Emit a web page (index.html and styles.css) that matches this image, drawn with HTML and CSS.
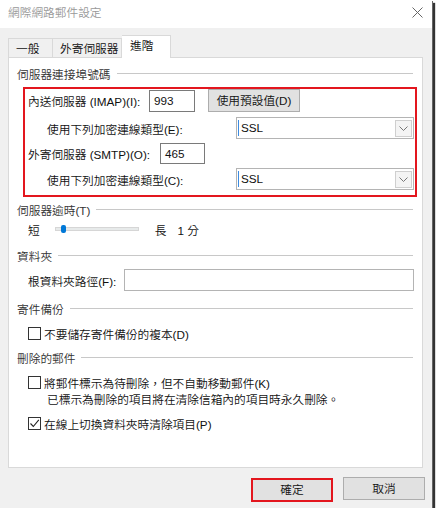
FILE: index.html
```html
<!DOCTYPE html>
<html lang="zh-Hant">
<head>
    <meta charset="UTF-8">
    <title>網際網路郵件設定</title>
    <link rel="stylesheet" href="styles.css">
</head>
<body>
    <div class="dialog">
        <!-- Title bar -->
        <div class="titlebar">
            <span class="title">網際網路郵件設定</span>
            <svg class="close" width="11" height="11" viewBox="0 0 11 11">
                <path d="M0.5 0.5 L10.5 10.5 M10.5 0.5 L0.5 10.5" stroke="#666" stroke-width="1" fill="none"/>
            </svg>
        </div>

        <!-- Tabs -->
        <div class="tabs">
            <div class="tab tab-first">一般</div>
            <div class="tab tab-second">外寄伺服器</div>
            <div class="tab tab-active">進階</div>
        </div>

        <!-- Tab panel -->
        <div class="panel">
            <div class="section-head first"><span>伺服器連接埠號碼</span><div class="rule"></div></div>

            <div class="highlight">
                <div class="row row-imap">
                    <span class="label label-imap">內送伺服器 (IMAP)(I):</span>
                    <div class="textbox port-imap">993</div>
                    <div class="button default-btn">使用預設值(D)</div>
                </div>
                <div class="row row-enc">
                    <span class="label label-enc">使用下列加密連線類型(E):</span>
                    <div class="combo">
                        <span class="combo-text">SSL</span>
                        <div class="combo-btn">
                            <svg width="9" height="5" viewBox="0 0 9 5"><path d="M0.5 0.5 L4.5 4.5 L8.5 0.5" stroke="#777" fill="none"/></svg>
                        </div>
                    </div>
                </div>
                <div class="row row-smtp">
                    <span class="label label-smtp">外寄伺服器 (SMTP)(O):</span>
                    <div class="textbox port-smtp">465</div>
                </div>
                <div class="row row-enc">
                    <span class="label label-enc">使用下列加密連線類型(C):</span>
                    <div class="combo">
                        <span class="combo-text">SSL</span>
                        <div class="combo-btn">
                            <svg width="9" height="5" viewBox="0 0 9 5"><path d="M0.5 0.5 L4.5 4.5 L8.5 0.5" stroke="#777" fill="none"/></svg>
                        </div>
                    </div>
                </div>
            </div>

            <div class="section-head timeout-head"><span>伺服器逾時(T)</span><div class="rule"></div></div>
            <div class="row slider-row">
                <span class="short">短</span>
                <div class="slider"><div class="thumb"></div></div>
                <span class="long">長</span>
                <span class="minutes">1 分</span>
            </div>

            <div class="section-head folder-head"><span>資料夾</span><div class="rule"></div></div>
            <div class="row folder-row">
                <span class="label label-folder">根資料夾路徑(F):</span>
                <div class="textbox folder-box"></div>
            </div>

            <div class="section-head sent-head"><span>寄件備份</span><div class="rule"></div></div>
            <div class="row check-row sent-check">
                <div class="checkbox"></div>
                <span>不要儲存寄件備份的複本(D)</span>
            </div>

            <div class="section-head deleted-head"><span>刪除的郵件</span><div class="rule"></div></div>
            <div class="row check-row mark-check">
                <div class="checkbox"></div>
                <span>將郵件標示為待刪除，但不自動移動郵件(K)</span>
            </div>
            <div class="note">已標示為刪除的項目將在清除信箱內的項目時永久刪除。</div>
            <div class="row check-row purge-check">
                <div class="checkbox">
                    <svg width="11" height="11" viewBox="0 0 11 11"><path d="M1.5 5.5 L4.3 8.5 L9.8 1.8" stroke="#222" stroke-width="1.1" fill="none"/></svg>
                </div>
                <span>在線上切換資料夾時清除項目(P)</span>
            </div>
        </div>

        <!-- Dialog buttons -->
        <div class="footer">
            <div class="button footer-btn ok-btn">確定</div>
            <div class="button footer-btn">取消</div>
        </div>
    </div>
</body>
</html>
```

FILE: styles.css
```css
/* Page */
body {
    margin: 0;
    background-color: white;
    font-family: "Liberation Sans", "Noto Sans CJK TC", sans-serif;
    font-size: 11.7px;
    font-weight: 350;
    color: #111;
}

/* Dialog window */
.dialog {
    width: 432px;
    height: 508px;
    background-color: #f0f0f0;
    box-shadow: 1px 1px 0 #666, 3px 3px 1px #333;
    display: flex;
    flex-direction: column;
    overflow: hidden;
}

/* Title bar */
.titlebar {
    height: 28px;
    flex: none;
    background-color: white;
    display: flex;
    align-items: center;
    padding-left: 8px;
    padding-right: 9px;
}

.title {
    flex: 1;
    color: #999;
    line-height: 16px;
    margin-top: -2px;
}

.close {
    margin-top: -3px;
}

/* Tabs */
.tabs {
    display: flex;
    align-items: flex-end;
    height: 22px;
    margin-top: 7px;
    margin-left: 8px;
    flex: none;
}

.tab {
    height: 19px;
    box-sizing: border-box;
    border: 1px solid #d9d9d9;
    border-bottom: none;
    border-left: none;
    padding-left: 7px;
    line-height: 19px;
}

.tab-first {
    width: 45px;
    border-left: 1px solid #d9d9d9;
}

.tab-second {
    width: 69px;
}

.tab-active {
    width: 49px;
    height: 23px;
    margin-bottom: -1px;
    background-color: white;
    position: relative;
    z-index: 1;
    padding-left: 8px;
    line-height: 20px;
}

/* White panel of the active tab */
.panel {
    height: 411px;
    box-sizing: border-box;
    margin: 0 9px 0 8px;
    background-color: white;
    border: 1px solid #d9d9d9;
    padding: 0 8px;
    flex: none;
}

/* Group heading with a line after it */
.section-head {
    display: flex;
    align-items: center;
    height: 16px;
    color: #333;
}

.section-head .rule {
    flex: 1;
    height: 1px;
    background-color: #c8c8c8;
    margin-left: 6px;
    margin-right: 1px;
}

.first { margin-top: 7px; }
.timeout-head { margin-top: 4px; }
.folder-head { margin-top: 10px; }
.sent-head { margin-top: 9px; }
.deleted-head { margin-top: 8px; }

/* Red annotation around the port settings */
.highlight {
    margin: 6px -3px 0 6px;
    border: 2px solid #e3161e;
    padding: 0 1px 5px 3px;
}

.row {
    display: flex;
    align-items: center;
}

.label {
    flex: none;
    white-space: nowrap;
}

.row-imap { height: 23px; }
.label-imap { width: 121px; }

.row-enc {
    height: 22px;
    margin-top: 5px;
}

.row-smtp + .row-enc { margin-top: 4px; }

.label-enc {
    width: 189px;
    padding-left: 19px;
}

.row-smtp {
    height: 21px;
    margin-top: 4px;
}

.label-smtp { width: 132px; }

/* Text boxes */
.textbox {
    box-sizing: border-box;
    background-color: white;
    border: 1px solid #7a7a7a;
    padding-left: 4px;
    line-height: 19px;
}

.port-imap {
    width: 46px;
    height: 22px;
}

.port-smtp {
    width: 45px;
    height: 21px;
}

/* Push buttons */
.button {
    box-sizing: border-box;
    background-color: #e1e1e1;
    border: 1px solid #adadad;
    text-align: center;
}

.default-btn {
    width: 92px;
    height: 23px;
    margin-left: 13px;
    line-height: 21px;
}

/* Drop-down list */
.combo {
    flex: 1;
    height: 22px;
    box-sizing: border-box;
    border: 1px solid #b4b4b4;
    display: flex;
    align-items: center;
    padding: 0 1px 0 1px;
}

.combo-text {
    flex: 1;
    border-left: 1px solid #3c8be0;
    padding-left: 2px;
    line-height: 16px;
}

.combo-btn {
    width: 17px;
    height: 17px;
    box-sizing: border-box;
    border: 1px solid #cfcfcf;
    background-color: #f4f4f4;
    display: flex;
    align-items: center;
    justify-content: center;
}

/* Timeout slider */
.slider-row {
    height: 16px;
    margin-top: 4px;
    padding-left: 11px;
}

.slider {
    position: relative;
    width: 84px;
    height: 4px;
    box-sizing: border-box;
    background-color: #e7eaea;
    border: 1px solid #d6d6d6;
    margin-left: 15px;
}

.thumb {
    position: absolute;
    left: 5px;
    top: -3px;
    width: 5px;
    height: 8px;
    border-radius: 2px;
    background-color: #0078d7;
}

.long { margin-left: 16px; }
.minutes { margin-left: 11px; }

/* Root folder */
.folder-row {
    height: 22px;
    margin-top: 6px;
    padding-left: 11px;
}

.label-folder { width: 96px; }

.folder-box {
    flex: 1;
    height: 22px;
    border-color: #b4b4b4;
}

/* Check boxes */
.check-row {
    height: 16px;
    padding-left: 11px;
}

.checkbox {
    width: 13px;
    height: 13px;
    box-sizing: border-box;
    border: 1px solid #333;
    background-color: white;
    margin-right: 3px;
    display: flex;
    align-items: center;
    justify-content: center;
}

.sent-check { margin-top: 9px; }
.mark-check { margin-top: 9px; }
.purge-check { margin-top: 7px; }

.note {
    height: 16px;
    line-height: 16px;
    margin-top: 2px;
    padding-left: 30px;
}

/* Dialog buttons */
.footer {
    display: flex;
    justify-content: flex-end;
    gap: 10px;
    padding: 9px 7px 0 0;
}

.footer-btn {
    width: 82px;
    height: 23px;
    line-height: 21px;
}

.ok-btn {
    height: 24px;
    margin-top: 1px;
    border: 2px solid #e3161e;
    line-height: 20px;
}
```
